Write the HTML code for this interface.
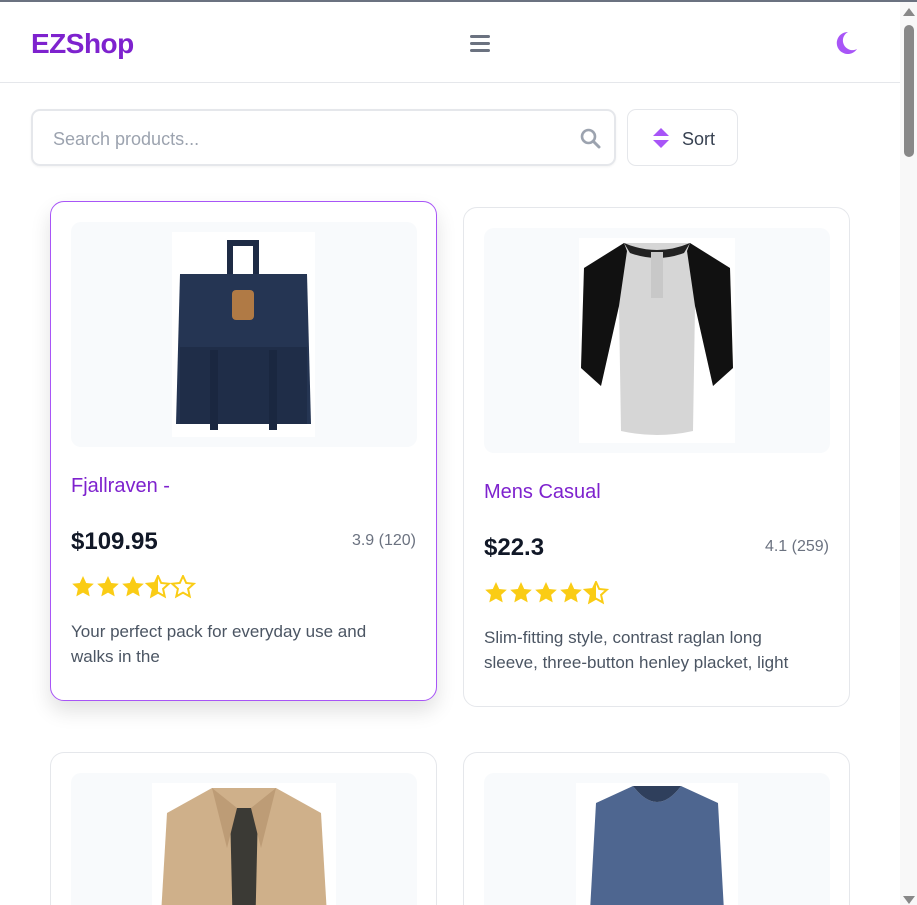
<!DOCTYPE html>
<html style="overflow:hidden;height:905px"><head><meta charset="utf-8"><style>
*{box-sizing:border-box;margin:0;padding:0}
body{width:917px;height:905px;overflow:hidden;background:#fff;font-family:"Liberation Sans",sans-serif;position:relative}
.top{position:absolute;left:0;top:0;width:917px;height:2px;background:#6b7280}
.sb{position:absolute;left:900px;top:2px;width:17px;height:903px;background:#f8f8f8}
.thumb{position:absolute;left:904px;top:25px;width:10px;height:132px;border-radius:5px;background:#888}
.hdr{position:absolute;left:0;top:2px;width:900px;height:81px;border-bottom:1px solid #e5e7eb}
.logo{position:absolute;left:31px;top:26px;font-size:28px;font-weight:bold;color:#7e22ce;letter-spacing:-0.5px}
.search{position:absolute;left:31px;top:109px;width:585px;height:57px;border:2px solid #e5e7eb;border-radius:9px;box-shadow:0 1px 2px rgba(0,0,0,.05)}
.search span{position:absolute;left:20px;top:18px;font-size:18px;color:#9ca3af}
.sort{position:absolute;left:627px;top:109px;width:111px;height:57px;border:1px solid #e5e7eb;border-radius:9px}
.sort span{position:absolute;left:54px;top:19px;font-size:18px;color:#374151}
.card{position:absolute;width:387px;background:#fff;border:1px solid #e5e7eb;border-radius:14px;overflow:hidden}
.card.h{border-color:#a855f7;box-shadow:0 10px 20px rgba(0,0,0,.12);overflow:visible}
.card.b{border-bottom:none;border-bottom-left-radius:0;border-bottom-right-radius:0}
.img{position:absolute;left:20px;top:20px;width:346px;height:225px;background:#f8fafc;border-radius:10px;overflow:hidden}
.t{position:absolute;left:20px;font-size:20px;color:#7e22ce}
.p{position:absolute;left:20px;font-size:24px;font-weight:bold;color:#111827}
.r{position:absolute;right:20px;font-size:16px;color:#6b7280}
.st{position:absolute;left:20px}
.d{position:absolute;left:20px;width:330px;font-size:17px;line-height:25px;color:#4b5563}
</style></head><body>
<svg width="0" height="0" style="position:absolute"><defs><path id="s" d="M12 1l3.2 7 7.6.8-5.7 5.1 1.6 7.5L12 17.6 5.3 21.4l1.6-7.5L1.2 8.8l7.6-.8Z"/><clipPath id="hc"><rect x="0" y="0" width="12" height="24"/></clipPath></defs></svg>
<div class="top"></div>
<div class="hdr">
<div class="logo">EZShop</div>
<svg style="position:absolute;left:470px;top:33px" width="20" height="17"><rect y="0" width="20" height="3" rx="1.5" fill="#6b7280"/><rect y="7" width="20" height="3" rx="1.5" fill="#6b7280"/><rect y="14" width="20" height="3" rx="1.5" fill="#6b7280"/></svg>
<svg style="position:absolute;left:834px;top:29px" width="24" height="24" viewBox="0 0 24 24"><path d="M14 1A11 11 0 1 0 23 18 9 9 0 0 1 14 1Z" fill="#a855f7"/></svg>
</div>
<div class="search"><span>Search products...</span>
<svg style="position:absolute;left:547px;top:17px" width="21" height="21" viewBox="0 0 21 21"><circle cx="8.5" cy="8.5" r="6.5" stroke="#9ca3af" stroke-width="2.6" fill="none"/><path d="M13.5 13.5L19 19" stroke="#9ca3af" stroke-width="3" stroke-linecap="round"/></svg></div>
<div class="sort"><svg style="position:absolute;left:24px;top:17px" width="18" height="22" viewBox="0 0 18 22"><path d="M9 1L17 9H1Z M9 21L17 13H1Z" fill="#a855f7"/></svg><span>Sort</span></div>

<div class="card h" style="left:50px;top:201px;height:500px">
<div class="img"><svg style="position:absolute;left:101px;top:10px" width="143" height="205" viewBox="0 0 143 205"><rect width="143" height="205" fill="#fff"/><path d="M55 8h32v40h-6V14H61v34h-6Z" fill="#1e2b45"/><path d="M8 42h127l4 150H4Z" fill="#253553"/><path d="M8 115h127v77H8Z" fill="#1f2d48"/><rect x="38" y="118" width="8" height="80" fill="#1a2740"/><rect x="97" y="118" width="8" height="80" fill="#1a2740"/><rect x="60" y="58" width="22" height="30" rx="4" fill="#b07a45"/></svg></div>
<div class="t" style="top:273px">Fjallraven -</div>
<div class="p" style="top:326px">$109.95</div>
<div class="r" style="top:330px">3.9 (120)</div>
<div class="st" style="top:373px"><svg width="125" height="24" viewBox="0 0 125 24"><use href="#s" fill="#facc15"/><use href="#s" x="25" fill="#facc15"/><use href="#s" x="50" fill="#facc15"/><g transform="translate(75 0)"><use href="#s" fill="none" stroke="#facc15" stroke-width="2"/><use href="#s" fill="#facc15" clip-path="url(#hc)"/></g><use href="#s" x="100" fill="none" stroke="#facc15" stroke-width="2"/></svg></div>
<div class="d" style="top:417px">Your perfect pack for everyday use and walks in the</div>
</div>

<div class="card" style="left:463px;top:207px;height:500px">
<div class="img"><svg style="position:absolute;left:95px;top:10px" width="156" height="205" viewBox="0 0 156 205"><rect width="156" height="205" fill="#fff"/><path d="M45 5L5 30 2 130l20 18 18-80 2 125q36 8 72 0l2-125 18 80 20-18-3-100-40-25Z" fill="#d6d6d6"/><path d="M45 5L5 30 2 130l20 18 18-80 8-55Z M111 5l40 25 3 100-20 18-18-80-8-55Z" fill="#111"/><path d="M45 5q33 14 66 0l-6 10q-27 10-54 0Z" fill="#222"/><rect x="72" y="14" width="12" height="46" fill="#c8c8c8"/></svg></div>
<div class="t" style="top:273px">Mens Casual</div>
<div class="p" style="top:326px">$22.3</div>
<div class="r" style="top:330px">4.1 (259)</div>
<div class="st" style="top:373px"><svg width="125" height="24" viewBox="0 0 125 24"><use href="#s" fill="#facc15"/><use href="#s" x="25" fill="#facc15"/><use href="#s" x="50" fill="#facc15"/><use href="#s" x="75" fill="#facc15"/><g transform="translate(100 0)"><use href="#s" fill="none" stroke="#facc15" stroke-width="2"/><use href="#s" fill="#facc15" clip-path="url(#hc)"/></g></svg></div>
<div class="d" style="top:417px">Slim-fitting style, contrast raglan long sleeve, three-button henley placket, light</div>
</div>

<div class="card b" style="left:50px;top:752px;height:153px">
<div class="img"><svg style="position:absolute;left:81px;top:10px" width="184" height="200" viewBox="0 0 184 200"><rect width="184" height="200" fill="#fff"/><path d="M60 5L15 30 5 200h174L169 30 124 5Z" fill="#cfb08a"/><path d="M78 25h28l-4 175H82Z" fill="#3b3a35"/><path d="M60 5l25 20-10 40ZM124 5l-25 20 10 40Z" fill="#bd9c76"/></svg></div>
</div>

<div class="card b" style="left:463px;top:752px;height:153px">
<div class="img"><svg style="position:absolute;left:92px;top:10px" width="162" height="200" viewBox="0 0 162 200"><rect width="162" height="200" fill="#fff"/><path d="M57 3L20 20 10 200h142L142 20 105 3Q81 35 57 3Z" fill="#4e6690"/><path d="M57 3q24 32 48 0Z" fill="#2f3f5c"/></svg></div>
</div>

<div class="sb"></div><div class="thumb"></div>
<svg style="position:absolute;left:903px;top:8px" width="12" height="8"><path d="M6 0L12 8H0Z" fill="#888"/></svg>
<svg style="position:absolute;left:903px;top:896px" width="12" height="8"><path d="M6 8L12 0H0Z" fill="#888"/></svg>
</body></html>
